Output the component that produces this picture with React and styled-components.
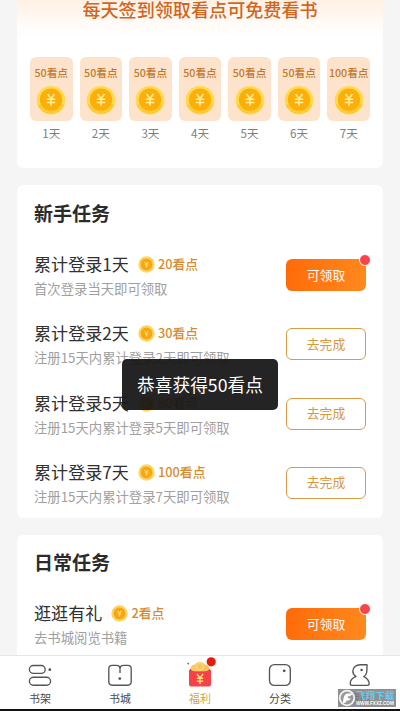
import React from 'react';
import styled, { createGlobalStyle } from 'styled-components';

const GlobalStyle = createGlobalStyle`
  * {
    box-sizing: border-box;
  }
  body {
    margin: 0;
    background: #f5f5f5;
    font-family: "Noto Sans CJK SC", sans-serif;
    overflow: hidden;
  }
`;

const Screen = styled.div`
  position: relative;
  display: flex;
  flex-direction: column;
  width: 400px;
  height: 711px;
  overflow: hidden;
  background: #f5f5f5;
`;

const Content = styled.main`
  flex: 1;
  min-height: 0;
  padding: 0 17px;
  overflow: hidden;
`;

const Card = styled.section`
  height: ${props => props.$height}px;
  margin-bottom: 17px;
  padding: 14px 17px 0;
  border-radius: 6px;
  background: #fff;
`;

const SignCard = styled(Card)`
  padding: 0 13px;
  border-radius: 0 0 6px 6px;
  background: linear-gradient(#fff0e3, #fffaf6 22px, #fff 37px);
`;

const SignTitle = styled.h1`
  height: 57px;
  margin: 0;
  color: #d2651c;
  font-size: 18.1px;
  font-weight: 500;
  line-height: 18px;
  text-align: center;
  white-space: nowrap;
`;

const Days = styled.div`
  display: grid;
  grid-template-columns: repeat(7, 1fr);
  gap: 7px;
`;

const Day = styled.div`
  color: #7e7e7e;
  font-size: 11.6px;
  line-height: 24px;
  text-align: center;
`;

const DayBox = styled.div`
  display: flex;
  flex-direction: column;
  align-items: center;
  height: 64px;
  padding-top: 8px;
  border-radius: 6px;
  background: #fee3cc;
  color: #c27a30;
  font-size: 10.7px;
  font-weight: 500;
  line-height: 16px;
  white-space: nowrap;

  svg {
    margin-top: 4px;
  }
`;

const CardTitle = styled.h2`
  height: 54px;
  margin: 0;
  color: #2b2b2b;
  font-size: 19px;
  font-weight: 700;
  line-height: 28px;
`;

const DailyTitle = styled(CardTitle)`
  height: 53px;
  line-height: 26px;
`;

const Task = styled.div`
  display: flex;
  justify-content: space-between;
  height: 69.3px;
`;

const TaskName = styled.div`
  display: flex;
  align-items: center;
  height: 22px;
  color: #303030;
  font-size: 17.1px;
  line-height: 22px;
  white-space: nowrap;

  svg {
    margin: 1px 3px 0 9px;
  }
`;

const Reward = styled.span`
  color: #d88a30;
  font-size: 12.8px;
  font-weight: 500;
`;

const TaskDesc = styled.div`
  margin-top: 4px;
  color: #a0a0a0;
  font-size: 13.35px;
  line-height: 20px;
  white-space: nowrap;
`;

const TaskButton = styled.button`
  position: relative;
  width: 80px;
  height: 32px;
  margin-top: 6px;
  padding: 0 0 1px;
  border: ${props => (props.$ready ? '0' : '1px solid #d99a48')};
  border-radius: 6px;
  background: ${props => (props.$ready ? 'linear-gradient(100deg, #ff6a08, #ff8a1e)' : '#fff')};
  color: ${props => (props.$ready ? '#fff' : '#d8963f')};
  font-family: inherit;
  font-size: 12.8px;
  line-height: 20px;
`;

const Dot = styled.i`
  position: absolute;
  top: -5px;
  right: -5px;
  width: 12px;
  height: 12px;
  border: 1px solid #fff;
  border-radius: 50%;
  background: #f8444c;
`;

const Toast = styled.div`
  position: absolute;
  top: 359px;
  left: 122px;
  width: 156px;
  height: 51px;
  border-radius: 5px;
  background: rgba(22, 22, 22, 0.94);
  color: #fff;
  font-size: 17.7px;
  line-height: 50px;
  text-align: center;
  white-space: nowrap;
`;

const TabBar = styled.nav`
  display: grid;
  grid-template-columns: repeat(5, 1fr);
  height: 56px;
  border-top: 1px solid #e6e6e6;
  border-bottom: 2px solid #111;
  background: #fff;
`;

const Tab = styled.div`
  display: flex;
  flex-direction: column;
  align-items: center;
  color: ${props => (props.$active ? '#d2a63c' : '#4a4a4a')};
  font-size: 11px;
  line-height: 16px;

  svg {
    overflow: visible;
    margin: 3px 0 4px;
  }
`;

const Watermark = styled.div`
  position: absolute;
  right: 4px;
  bottom: 4px;
  display: flex;
  align-items: center;
  width: 58px;
  height: 18px;
  background: rgba(125, 125, 125, 0.85);
`;

const WatermarkText = styled.div`
  color: #62cdf8;
  font-size: 9.6px;
  font-weight: 700;
  line-height: 11px;
  white-space: nowrap;

  small {
    display: block;
    color: #fff;
    font-family: "Liberation Sans", sans-serif;
    font-size: 4.6px;
    line-height: 6px;
  }
`;

const Coin = () => (
  <svg width="30" height="30" viewBox="0 0 30 30" fill="none">
    <circle cx="15" cy="15.2" r="14.3" fill="#fdda4e" />
    <path d="M1.6 19.5a14.3 14.3 0 0 0 26.8 0z" fill="#fbcb35" />
    <circle cx="15" cy="14.6" r="11.2" fill="#fcaf0b" />
    <path d="M11.6 9l3.4 4.8L18.4 9M15 13.8v7M10.8 14.2h8.4M10.8 17.4h8.4" stroke="#fff0a0" strokeWidth="1.5" />
  </svg>
);

const SmallCoin = () => (
  <svg width="17" height="17" viewBox="0 0 17 17" fill="none">
    <circle cx="8.5" cy="8.5" r="8.2" fill="#fbd560" />
    <circle cx="8.5" cy="8.5" r="5.9" fill="#f9a514" />
    <path d="M6.7 6l1.8 2.4L10.3 6M8.5 8.4v3M6.7 9h3.6" stroke="#ffdc63" strokeWidth="1.2" />
  </svg>
);

const iconProps = {
  width: 26,
  height: 27,
  viewBox: '0 0 26 27',
  fill: 'none',
  stroke: '#555',
  strokeWidth: 1.35,
  strokeLinejoin: 'round',
};

const ShelfIcon = () => (
  <svg {...iconProps}>
    <rect x="2.4" y="6.5" width="15.8" height="7.8" rx="3.9" />
    <rect x="2.4" y="18.2" width="21.2" height="8" rx="4" />
    <circle cx="22.8" cy="10.7" r="1.4" fill="#555" stroke="none" />
  </svg>
);

const StoreIcon = () => (
  <svg {...iconProps}>
    <path d="M13 14V10Q13 6.3 9.5 6.3H5Q1.8 6.3 1.8 9.6V22.8Q1.8 26.2 5.2 26.2H20.6Q24.2 26.2 24.2 22.8V9.6Q24.2 6.3 21 6.3H16.5Q13 6.3 13 10" />
    <circle cx="12.8" cy="19.6" r="1.4" fill="#555" stroke="none" />
  </svg>
);

const WelfareIcon = () => (
  <svg width="26" height="27" viewBox="0 0 26 27" fill="none">
    <path d="M2 12.5Q5 6 13 5.5T24 12.5z" fill="#cf2831" />
    <circle cx="8" cy="9.5" r="4" fill="#f6cb62" />
    <circle cx="18" cy="9.5" r="4" fill="#f4c45b" />
    <circle cx="13" cy="7.8" r="4.9" fill="#f5c55c" />
    <circle cx="13" cy="7.8" r="3.4" stroke="#fbe49a" strokeWidth=".8" />
    <path d="M2 11Q13 14 24 11V25Q24 27.5 21.5 27.5H4.5Q2 27.5 2 25z" fill="#f74047" />
    <path d="M10 15l3 4 3-4M13 19v6.2M9.8 19.3h6.4M9.8 22.2h6.4" stroke="#ffdc78" strokeWidth="1.4" />
    <circle cx="1.2" cy="4.6" r=".9" fill="#e4352b" />
    <circle cx="24.2" cy="2.8" r="4.6" fill="#e31c0c" />
  </svg>
);

const CategoryIcon = () => (
  <svg {...iconProps}>
    <rect x="2.5" y="5.6" width="20.8" height="20.8" rx="4.8" />
    <circle cx="17.2" cy="11.8" r="1.4" fill="#555" stroke="none" />
  </svg>
);

const MineIcon = () => (
  <svg {...iconProps}>
    <path d="M20 5.7H13.2C9.2 5.7 5.8 8.6 5.8 12.2C5.8 15 7.4 16.4 9 17.6C6 18.6 3.2 20.6 3.2 24.8Q3.2 26.3 4.8 26.3H20.6Q22.2 26.3 22.2 24.8C22.2 21.2 19.6 19 16.8 17.6C20.2 15.8 20 12 20 5.7Z" />
    <circle cx="14.6" cy="11" r="1.3" fill="#555" stroke="none" />
  </svg>
);

const WatermarkLogo = () => (
  <svg width="18" height="18" viewBox="0 0 18 18" fill="none">
    <circle cx="9" cy="9" r="7.3" fill="#999" stroke="#eef3f5" strokeWidth="1.8" />
    <path d="M5 14Q5 6 9 4.6H14.4Q13.6 7.2 9.6 7.6Q9.4 9.6 13 9.6Q11.6 12 8.6 11.6Q8.2 14.6 5 14z" fill="#fff" />
  </svg>
);

const days = [50, 50, 50, 50, 50, 50, 100];

const newbieTasks = [
  { name: '累计登录1天', reward: 20, desc: '首次登录当天即可领取', ready: true },
  { name: '累计登录2天', reward: 30, desc: '注册15天内累计登录2天即可领取' },
  { name: '累计登录5天', reward: 80, desc: '注册15天内累计登录5天即可领取' },
  { name: '累计登录7天', reward: 100, desc: '注册15天内累计登录7天即可领取' },
];

const dailyTasks = [
  { name: '逛逛有礼', reward: 2, desc: '去书城阅览书籍', ready: true },
];

const tabs = [
  { label: '书架', Icon: ShelfIcon },
  { label: '书城', Icon: StoreIcon },
  { label: '福利', Icon: WelfareIcon, active: true },
  { label: '分类', Icon: CategoryIcon },
  { label: '我的', Icon: MineIcon },
];

function TaskRow({ task }) {
  return (
    <Task>
      <div>
        <TaskName>
          {task.name}
          <SmallCoin />
          <Reward>{task.reward}看点</Reward>
        </TaskName>
        <TaskDesc>{task.desc}</TaskDesc>
      </div>
      <TaskButton $ready={task.ready}>
        {task.ready ? '可领取' : '去完成'}
        {task.ready && <Dot />}
      </TaskButton>
    </Task>
  );
}

function App() {
  return (
    <Screen>
      <GlobalStyle />
      <Content>
        <SignCard $height={168}>
          <SignTitle>每天签到领取看点可免费看书</SignTitle>
          <Days>
            {days.map((points, i) => (
              <Day key={i}>
                <DayBox>
                  {points}看点
                  <Coin />
                </DayBox>
                {i + 1}天
              </Day>
            ))}
          </Days>
        </SignCard>
        <Card $height={333}>
          <CardTitle>新手任务</CardTitle>
          {newbieTasks.map(task => <TaskRow key={task.name} task={task} />)}
        </Card>
        <Card $height={140}>
          <DailyTitle>日常任务</DailyTitle>
          {dailyTasks.map(task => <TaskRow key={task.name} task={task} />)}
        </Card>
      </Content>
      <TabBar>
        {tabs.map(({ label, Icon, active }) => (
          <Tab key={label} $active={active}>
            <Icon />
            {label}
          </Tab>
        ))}
      </TabBar>
      <Toast>恭喜获得50看点</Toast>
      <Watermark>
        <WatermarkLogo />
        <WatermarkText>
          飞翔下载
          <small>WWW.FXXZ.COM</small>
        </WatermarkText>
      </Watermark>
    </Screen>
  );
}

export default App;
